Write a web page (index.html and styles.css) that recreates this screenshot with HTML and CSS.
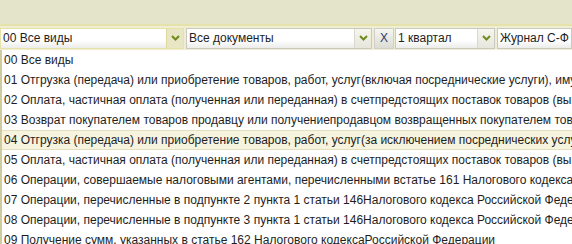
FILE: index.html
```html
<!DOCTYPE html>
<html lang="ru">
<head>
  <meta charset="UTF-8">
  <title>Журнал</title>
  <link rel="stylesheet" href="styles.css">
</head>
<body>

<div class="top"></div>

<div class="toolbar">
  <div class="combo combo-focus combo-kind">
    <span class="combo-text">00 Все виды</span>
    <span class="combo-btn"><svg width="9" height="6" viewBox="0 0 9 6"><path d="M1 1 L4.5 4.5 L8 1" fill="none" stroke="#6f8a1e" stroke-width="2"/></svg></span>
  </div>
  <div class="combo combo-docs">
    <span class="combo-text">Все документы</span>
    <span class="combo-btn"><svg width="9" height="6" viewBox="0 0 9 6"><path d="M1 1 L4.5 4.5 L8 1" fill="none" stroke="#6f8a1e" stroke-width="2"/></svg></span>
  </div>
  <button class="clear">X</button>
  <div class="combo combo-period">
    <span class="combo-text">1 квартал</span>
    <span class="combo-btn"><svg width="9" height="6" viewBox="0 0 9 6"><path d="M1 1 L4.5 4.5 L8 1" fill="none" stroke="#6f8a1e" stroke-width="2"/></svg></span>
  </div>
  <div class="combo combo-journal">
    <span class="combo-text">Журнал С-Ф</span>
  </div>
</div>

<ul class="list">
  <li>00 Все виды</li>
  <li>01 Отгрузка (передача) или приобретение товаров, работ, услуг(включая посреднические услуги), имущественных прав</li>
  <li>02 Оплата, частичная оплата (полученная или переданная) в счетпредстоящих поставок товаров (выполнения работ, оказания услуг)</li>
  <li>03 Возврат покупателем товаров продавцу или получениепродавцом возвращенных покупателем товаров</li>
  <li class="active">04 Отгрузка (передача) или приобретение товаров, работ, услуг(за исключением посреднических услуг)</li>
  <li>05 Оплата, частичная оплата (полученная или переданная) в счетпредстоящих поставок товаров (выполнения работ)</li>
  <li>06 Операции, совершаемые налоговыми агентами, перечисленными встатье 161 Налогового кодекса Российской Федерации</li>
  <li>07 Операции, перечисленные в подпункте 2 пункта 1 статьи 146Налогового кодекса Российской Федерации</li>
  <li>08 Операции, перечисленные в подпункте 3 пункта 1 статьи 146Налогового кодекса Российской Федерации</li>
  <li>09 Получение сумм, указанных в статье 162 Налогового кодексаРоссийской Федерации</li>
</ul>

</body>
</html>
```

FILE: styles.css
```css
body {
  margin: 0;
  font-family: "Liberation Sans", Arial, sans-serif;
  font-size: 12px;
  color: #1e1e1e;
  background-color: #ffffff;
  overflow: hidden;
}

.top {
  height: 24px;
  background-color: #e4e4cb;
  border-bottom: 2px solid #e6e2ac;
}

.toolbar {
  display: flex;
  align-items: center;
  height: 24px;
  background-color: #efeed2;
  white-space: nowrap;
}

.combo {
  display: flex;
  height: 21px;
  box-sizing: border-box;
  border: 1px solid #c9c9c0;
  background-color: #ffffff;
  margin-right: 2px;
  overflow: hidden;
}

.combo-text {
  flex: 1;
  padding-left: 2px;
  line-height: 19px;
  background: linear-gradient(#ffffff 60%, #ececea);
  overflow: hidden;
}

.combo-btn {
  width: 16px;
  display: flex;
  align-items: center;
  justify-content: center;
  border-left: 1px solid #d8d8cc;
  background: linear-gradient(#f6f6ee, #e6e6dc);
}

.combo-focus {
  border-color: #e6e2a8;
}

.combo-focus .combo-btn {
  background: #e8e6c4;
  border-left-color: #dcd8a0;
}

.combo-kind {
  width: 184px;
}

.combo-docs {
  width: 186px;
}

.combo-period {
  width: 100px;
}

.combo-journal {
  flex: 1;
  margin-right: 0;
}

.clear {
  width: 20px;
  height: 21px;
  padding: 0;
  margin-right: 1px;
  border: 1px solid #d0d0c8;
  background: linear-gradient(#f6f6f2, #dcdcd6);
  font-family: "Liberation Sans", Arial, sans-serif;
  font-size: 12px;
  color: #2e3a6a;
}

.list {
  list-style: none;
  margin: 0;
  padding: 0;
  border-left: 2px solid #cfcba0;
  white-space: nowrap;
  overflow: hidden;
}

.list li {
  height: 20px;
  line-height: 20px;
  padding-left: 2px;
  box-sizing: border-box;
}

.list li.active {
  background-color: #f6f3df;
  border-top: 1px solid #e4dfbe;
  border-bottom: 1px solid #e4dfbe;
  line-height: 18px;
}
```
